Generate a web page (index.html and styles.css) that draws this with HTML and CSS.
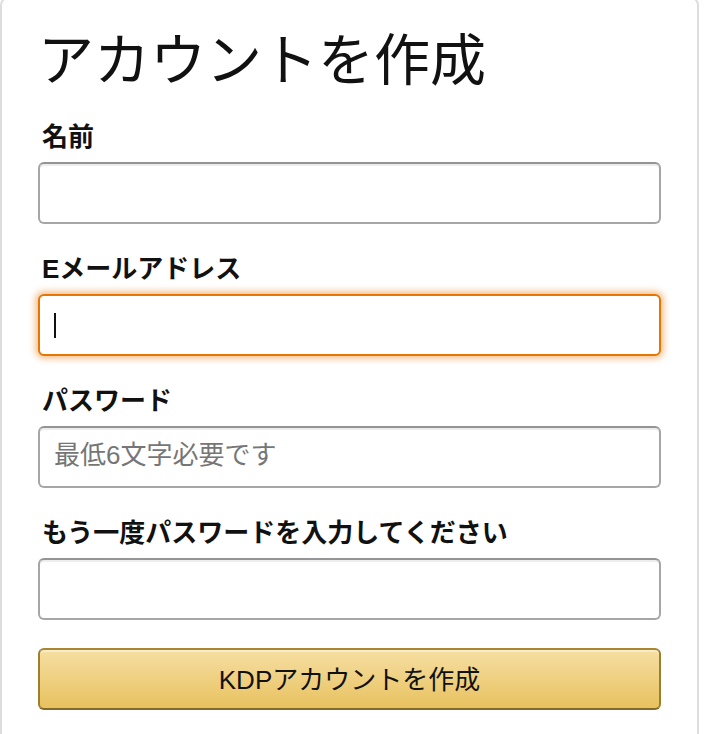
FILE: index.html
```html
<!DOCTYPE html>
<html lang="ja">
<head>
<meta charset="utf-8">
<title>アカウントを作成</title>
<link rel="stylesheet" href="styles.css">
</head>
<body>
<div class="card">
  <h1 class="title">アカウントを作成</h1>
  <form class="form">
    <div class="group">
      <label class="label" for="name">名前</label>
      <input class="field" id="name" type="text">
    </div>
    <div class="group">
      <label class="label">Eメールアドレス</label>
      <div class="field field-focus"><span class="caret"></span></div>
    </div>
    <div class="group">
      <label class="label" for="pw">パスワード</label>
      <input class="field" id="pw" type="password" placeholder="最低6文字必要です">
    </div>
    <div class="group">
      <label class="label" for="pw2">もう一度パスワードを入力してください</label>
      <input class="field" id="pw2" type="password">
    </div>
    <button class="btn" type="button">KDPアカウントを作成</button>
  </form>
</div>
</body>
</html>
```
FILE: styles.css
```css
html, body {
  margin: 0;
  padding: 0;
  background: #fff;
}
body {
  font-family: "Liberation Sans", "Noto Sans CJK JP", sans-serif;
  color: #111;
}
.card {
  width: 699px;
  box-sizing: border-box;
  margin-top: -3px;
  border: 2px solid #ddd;
  border-radius: 8px;
  padding: 28px 36px 40px;
}
.title {
  margin: 0 0 24px;
  font-size: 56px;
  line-height: 67px;
  font-weight: 400;
  color: #111;
}
.form {
  display: flex;
  flex-direction: column;
  gap: 26px;
  margin: 0;
}
.group {
  display: flex;
  flex-direction: column;
}
.label {
  display: block;
  font-size: 26px;
  line-height: 38px;
  font-weight: 700;
  padding-left: 4px;
  margin-bottom: 6px;
  color: #111;
}
.field {
  display: flex;
  align-items: center;
  width: 100%;
  height: 62px;
  box-sizing: border-box;
  margin: 0;
  padding: 0 14px 3px;
  border: 2px solid #a6a6a6;
  border-top-color: #949494;
  border-radius: 6px;
  background: #fff;
  box-shadow: inset 0 2px 0 rgba(0, 0, 0, 0.07);
  font-family: "Liberation Sans", "Noto Sans CJK JP", sans-serif;
  font-size: 26px;
  color: #111;
  outline: none;
}
.field::placeholder {
  color: #767676;
  opacity: 1;
}
.field-focus {
  padding-bottom: 0;
  border-color: #e77600;
  box-shadow: 0 0 6px 3px rgba(228, 121, 17, 0.45);
}
.caret {
  display: block;
  width: 2px;
  height: 25px;
  background: #111;
}
.btn {
  margin-top: 2px;
  height: 62px;
  width: 100%;
  box-sizing: border-box;
  border: 2px solid;
  border-color: #a88734 #9c7e31 #846a29;
  border-radius: 6px;
  background: linear-gradient(to bottom, #f6dfa3, #e8c25f);
  box-shadow: inset 0 2px 0 rgba(255, 255, 255, 0.4);
  font-family: "Liberation Sans", "Noto Sans CJK JP", sans-serif;
  font-size: 26px;
  color: #111;
  padding: 0 0 4px;
  cursor: pointer;
}
```
